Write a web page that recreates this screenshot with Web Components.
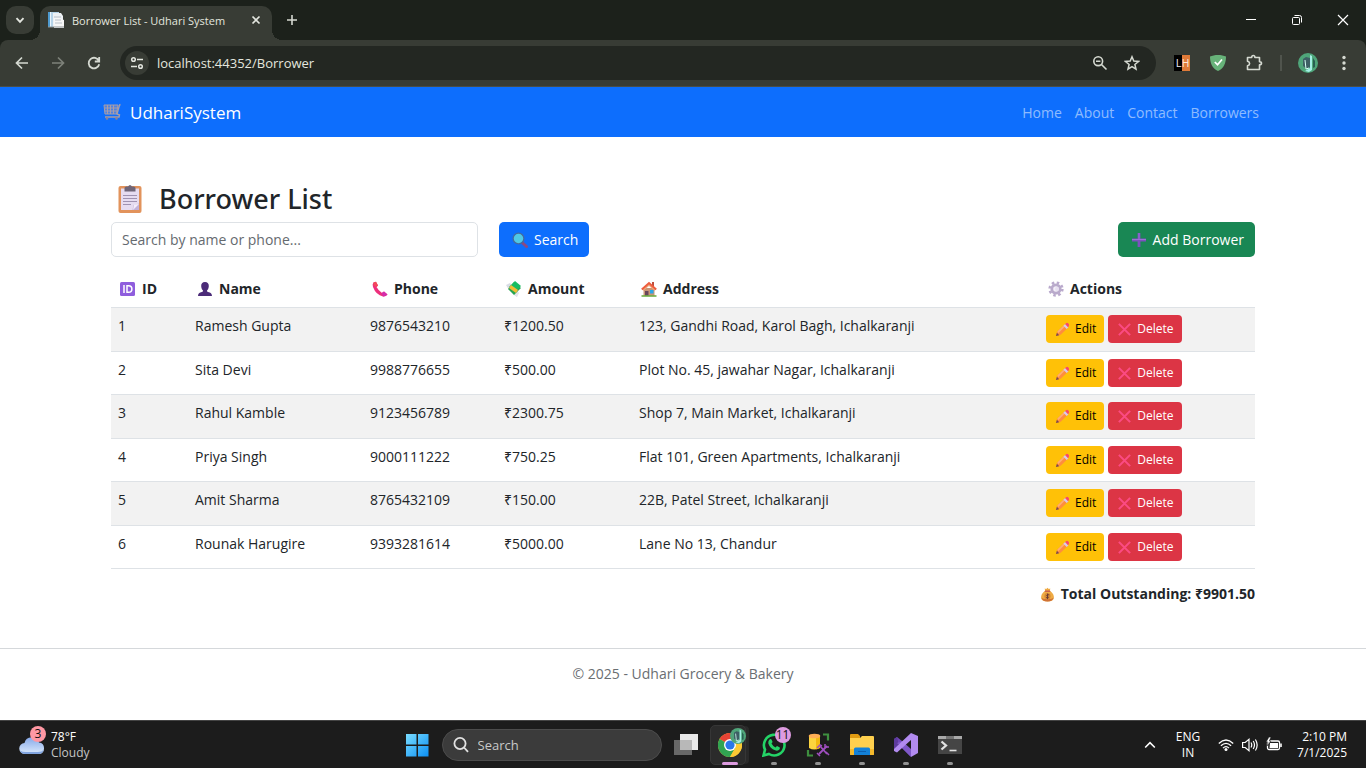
<!DOCTYPE html>
<html lang="en">
<head>
<meta charset="utf-8">
<title>Borrower List - Udhari System</title>
<meta name="viewport" content="width=device-width, initial-scale=1">
<style>
  body { margin: 0; min-height: 100vh; display: flex; flex-direction: column; background: #fff;
    font-family: "Open Sans", "Noto Sans", sans-serif; font-size: 14px; color: #212529; }
  site-page { flex: 1; }
</style>
</head>
<body>
<tab-strip label="Borrower List - Udhari System"></tab-strip>
<browser-toolbar url="localhost:44352/Borrower"></browser-toolbar>
<site-page>
  <site-navbar slot="nav">
    <span slot="brand">UdhariSystem</span>
  </site-navbar>
  <page-title>Borrower List</page-title>
  <search-bar></search-bar>
  <borrower-table></borrower-table>
  <total-line>Total Outstanding: ₹9901.50</total-line>
  <span slot="footer">© 2025 - Udhari Grocery &amp; Bakery</span>
</site-page>
<task-bar></task-bar>

<script>
const ICONS = {
  chevron: ['0 0 16 16', '<path d="M4.5 6.2 8 9.8l3.500-3.600" fill="none" stroke="#e3e6df" stroke-width="1.900"/>'],
  favicon: ['0 0 16 16', '<path d="M0 0h9v15H0z" fill="#e8f3fb"/><path d="M0 0h2v15H0z" fill="#4f9bd0"/><path d="M3 0h8v15H3z" fill="#b5d3e8"/><path d="M5 1h8l2 3v11H5z" fill="#eef1f4"/><path d="M11 6l5 2v8H6V6z" fill="#f7f7f7"/><path d="M6 5h7M7 8h6M7 11h7" stroke="#b9c0c8"/><path d="M0 15h16" stroke="#8d9497"/>'],
  close: ['0 0 16 16', '<path d="M4.500 4.500l7 7m0-7-7 7" stroke="#e3e6df" stroke-width="1.700"/>'],
  plus: ['0 0 16 16', '<path d="M8 3v10M3 8h10" stroke="#d5d9d1" stroke-width="1.600"/>'],
  winmin: ['0 0 16 16', '<path d="M3 7.500h10" stroke="#fff"/>'],
  winmax: ['0 0 16 16', '<rect x="3.500" y="5.500" width="7" height="7" rx="1" fill="none" stroke="#fff"/><path d="M5.500 3.500h5a2 2 0 0 1 2 2v5" fill="none" stroke="#fff"/>'],
  winclose: ['0 0 16 16', '<path d="M3 3l10 10m0-10L3 13" stroke="#fff" stroke-width="1.200"/>'],
  back: ['0 0 16 16', '<path d="M14 8H3m5-5.500L2.500 8 8 13.500" fill="none" stroke="#d5d9d1" stroke-width="1.700"/>'],
  forward: ['0 0 16 16', '<path d="M2 8h11M8 2.500 13.500 8 8 13.500" fill="none" stroke="#7d8179" stroke-width="1.700"/>'],
  reload: ['0 0 16 16', '<path d="M12.900 6A5.300 5.300 0 1 0 13.200 9.200M13.200 2v4.500H8.800" fill="none" stroke="#d5d9d1" stroke-width="1.800"/>'],
  tune: ['0 0 16 16', '<g fill="none" stroke="#e3e6df" stroke-width="1.500"><circle cx="4.500" cy="4.500" r="1.800"/><path d="M8 4.500h6M2 11.500h6"/><circle cx="11.500" cy="11.500" r="1.800"/></g>'],
  zoomout: ['0 0 16 16', '<g fill="none" stroke="#d5d9d1" stroke-width="1.600"><circle cx="6.200" cy="6.200" r="4.400"/><path d="M9.500 9.500l5 5M4 6.200h4.400"/></g>'],
  star: ['0 0 16 16', '<path d="M8 1.800l1.800 4.300 4.700.4-3.600 3 1.100 4.600L8 11.600l-4 2.500 1.100-4.600-3.600-3 4.700-.4z" fill="none" stroke="#d5d9d1" stroke-width="1.500"/>'],
  lh: ['0 0 16 16', '<path d="M0 0h8v16H0z" fill="#000"/><path d="M8 0h8v16H8z" fill="#e07b39"/><text x="2" y="12" font-family="Liberation Sans, sans-serif" font-size="10" fill="#eee">L</text><text x="8" y="12" font-family="Liberation Sans, sans-serif" font-size="10" fill="#fbe6d8">H</text>'],
  shield: ['0 0 16 16', '<path d="M8 0c3 0 6 .6 8 1.500 0 7-2.500 12-8 14.500C2.500 13.500 0 8.500 0 1.500 2 .6 5 0 8 0z" fill="#67b279"/><path d="M4.800 7l2.700 2.700L12 4.500" fill="none" stroke="#fff" stroke-width="1.700"/>'],
  puzzle: ['0 0 18 18', '<path d="M2.500 3.500h4.200c0-1.500.7-2 1.600-2s1.600.5 1.600 2h4.600v4.200c1.600 0 2 .8 2 1.600s-.4 1.600-2 1.600v4.600h-12v-3.800c1.500-.3 2.100-1.200 2.100-2.200S4 7.600 2.500 7.300z" fill="none" stroke="#d5d9d1" stroke-width="1.600" stroke-linejoin="round"/>'],
  avatar: ['0 0 20 20', '<circle cx="10" cy="10" r="10" fill="#4fa57a"/><path d="M5 6l3-2 4 1v9l-3 2-4-3z" fill="#3d5f64"/><path d="M12 2l2 1v14l-3 2-4-1 5-3z" fill="#a3efe5"/><path d="M7 7l1 9 3-1" stroke="#d5fff5" fill="none"/><path d="M15 5l2 3v6l-2 1z" fill="#286052"/>'],
  dots: ['0 0 16 16', '<g fill="#d5d9d1"><circle cx="8" cy="2.500" r="1.700"/><circle cx="8" cy="8" r="1.700"/><circle cx="8" cy="13.500" r="1.700"/></g>'],
  cart: ['0 0 18 18', '<g fill="none" stroke="#a79da8"><path d="M1 2h14l-1.500 9H2z" fill="#4f81df"/><path d="M1.500 5h13M1.500 8h12.500M4.500 2v9M7.500 2v9M10.500 2v9"/><path d="M17.500 1.500l-1 .5-2.500 9 2.500 1-.5 2H2" stroke-width="1.400"/></g><circle cx="4" cy="15.500" r="1.300" fill="#8b8190"/><circle cx="13.500" cy="15.500" r="1.300" fill="#8b8190"/>'],
  clipboard: ['0 0 24 28', '<rect x="0" y="1" width="23" height="27" rx="2" fill="#e2935c"/><path d="M2.500 3.500h18v15.500l-6 6h-12z" fill="#e6dcf1"/><path d="M20.500 18.500V25h-6.500l1-5z" fill="#c3b2da"/><path d="M14.500 25l1-5.500 5-.5z" fill="#f4edfb"/><path d="M6 6.500V3q0-1.500 2-1.500h1.500q2-3 4 0H15q2 0 2 1.500v3.500z" fill="#6f6578"/><path d="M4.500 10.500h14M4.500 13.500h14M4.500 16.500h14M4.500 19.500h8" stroke="#9f92b1"/>'],
  idbox: ['0 0 16 16', '<rect x="0" y="1" width="15" height="14" rx="1.500" fill="#8f5ddd"/><path d="M4 4v8" stroke="#fff" stroke-width="1.500"/><path d="M7 4.700h1.600a3 3 0 0 1 0 6.600H7z" fill="none" stroke="#fff" stroke-width="1.500"/>'],
  person: ['0 0 16 16', '<path d="M8 1c2.600 0 4 1.700 3.800 4.200C11.600 8 10.500 9 10 9.500c0 1 .5 1.500 2 1.800 2 .4 2.800 1.500 3 3.700H1c.2-2.200 1-3.300 3-3.700 1.500-.3 2-.8 2-1.800-.5-.5-1.600-1.500-1.800-4.300C4 2.700 5.400 1 8 1z" fill="#4b2b78"/>'],
  phone: ['0 0 16 16', '<path d="M1.500 1.500Q0 3 1 6q3 8 10 9.500 3 .4 4.500-2L12 10.500l-2 1.500Q6 9 4.500 6L6 4.500 4 .7z" fill="#ed2f7c"/><path d="M1.500 1.500 4 .7 6 4.500 4.500 6Q1 4.500 1.500 1.500" fill="#f24a58"/><path d="M9.500 12l2.500-1.500 3.500 3q-2 2-4.500 2z" fill="#d42cab"/>'],
  money: ['0 0 16 16', '<path d="M0 4l4-2 3 4-4 3zM7 9l5 1-1 6-3-2z" fill="#d9dce4"/><path d="M11 9l2 3-2 4-3-3z" fill="#e4e4ea"/><path d="M8 1l7 6-7 7-6-6z" fill="#27a552"/><path d="M9 0l6 5-6 6-6-5z" fill="#17bd62"/><path d="M5 4l7 5-2 3-7-5z" fill="#f3bd35"/>'],
  house: ['0 0 16 16', '<path d="M2.500 7h11v8h-11z" fill="#c99576"/><path d="M11 1h2v5h-2z" fill="#c04e3c"/><path d="M8 2L2 8v2l6-5 6 5V8z" fill="#f0aa7c"/><path d="M.800 8.500 8 2l7.200 6.500" fill="none" stroke="#ee5d3f" stroke-width="2"/><path d="M4 10h3.500v5H4z" fill="#68465a"/><path d="M9 9h3.500v3.500H9z" fill="#2aa6e8"/><path d="M.500 15h15" stroke="#6fae43" stroke-width="1.600"/>'],
  gear: ['0 0 16 16', '<circle cx="8" cy="8" r="6.400" fill="none" stroke="#b9a9cc" stroke-width="2.500" stroke-dasharray="2.500 2.527"/><circle cx="8" cy="8" r="4.200" fill="#f3eef8" stroke="#b9aacb" stroke-width="2.800"/><circle cx="9" cy="8" r="2" fill="#e6def0"/>'],
  magnifier: ['0 0 16 16', '<path d="M9.500 10l5 4.500" stroke="#8a4a83" stroke-width="3" stroke-linecap="round"/><circle cx="6.500" cy="6.500" r="5.400" fill="#4fc9e6" stroke="#456a9e" stroke-width="1.300"/>'],
  addplus: ['0 0 16 16', '<path d="M8 1v14M1 8h14" stroke="#7b51bd" stroke-width="2.800"/><path d="M8 1v7M1 7.500h14" stroke="#9a70d8" stroke-width="1"/>'],
  pencil: ['0 0 16 16', '<path d="M1 15l1.500-5L10 3l3.500 3.500L6 13.500z" fill="#ff8d3e"/><path d="M2.500 10L10 3l1.200 1.200L3.500 12z" fill="#ffae6f"/><path d="M1 15l1-3.500L4.500 14z" fill="#7a4a4a"/><path d="M9 4l3.500 3.500 1.800-1.800-3.500-3.500z" fill="#d8cbea"/><path d="M10.800 2.200 12.300 1q1-.5 2 .7t.6 2.200l-1 1.800z" fill="#f8486c"/>'],
  cross: ['0 0 16 16', '<path d="M2 2l12 12m0-12L2 14" stroke="#fb4b83" stroke-width="2.200"/>'],
  bag: ['0 0 16 16', '<path d="M5.500 4 5 1.500l1.700.5L8 .8 9.300 2l1.700-.5L10.500 4q5 3.500 4.200 8-.7 3.500-6.700 3.500T1.300 12Q.5 7.500 5.500 4z" fill="#efab45"/><path d="M1.300 11q1 4.500 6.700 4.500t6.700-4.500q-1 2-6.700 2T1.300 11" fill="#cf7238"/><path d="M5.300 3.800h5.400l.3 1.400H5z" fill="#c9604a"/><circle cx="8" cy="9.800" r="3.300" fill="#d58a35"/><path d="M8 7v6M9.800 8.300h-2q-1.300.8 0 1.500t1 1.500H6.500" stroke="#693a34" fill="none"/>'],
  cloud: ['0 0 26 18', '<defs><linearGradient id="c" x1="0" y1="0" x2="0" y2="1"><stop stop-color="#85a8e8"/><stop offset="1" stop-color="#dbeafd"/></linearGradient></defs><path d="M6 18a5.500 5.500 0 0 1-.5-11A7.500 7.500 0 0 1 20 6.500 5.800 5.800 0 0 1 20 18z" fill="url(#c)"/><path d="M1 14.500q2 1.500 6 1.500h12q4 0 5.500-2Q23.500 18 20 18H6q-4 0-5-3.500" fill="#80a4df"/>'],
  start: ['0 0 24 24', '<defs><linearGradient id="w" x1="0" y1="0" x2="1" y2="1"><stop stop-color="#79dcff"/><stop offset="1" stop-color="#0c90f5"/></linearGradient></defs><path d="M1 1h10.500v10.500H1zM13 1h10.500v10.500H13zM1 13h10.500v10.500H1zM13 13h10.500v10.500H13z" fill="url(#w)"/>'],
  lens: ['0 0 16 16', '<g fill="none" stroke="#e2e2e2" stroke-width="1.800"><circle cx="7" cy="6.500" r="5.600"/><path d="M11 10.500l4 4.300"/></g>'],
  taskview: ['0 0 24 24', '<path d="M0 7h18v15H0z" fill="#686868"/><path d="M6 1h18v16H6z" fill="#e9e9e9"/><path d="M6 7h12v10H6z" fill="#b8b8b8"/>'],
  chrome: ['0 0 24 24', '<circle cx="12" cy="12" r="12" fill="#fbc934"/><path d="M12 12L1.600 6A12 12 0 0 1 22.400 6z" fill="#e64335"/><path d="M1.600 6A12 12 0 0 0 12 24l5.200-9L12 12z" fill="#31a452"/><path d="M12 6h10.400A12 12 0 0 1 12 24l5.200-9z" fill="#fbc934"/><circle cx="12" cy="12" r="6" fill="#fff"/><circle cx="12" cy="12" r="4.600" fill="#2a77ea"/>'],
  whatsapp: ['0 0 24 24', '<path d="M1.500 22.500l1.500-5.800A10.300 10.300 0 1 1 7 21z" fill="none" stroke="#24d467" stroke-width="2.600"/><path d="M7.500 6.500Q9 5.500 9.700 7l.9 2-1.100 1.500q1.300 2.600 4 4l1.500-1.500 2.500 1.200q1 .6-.1 2.300-1.500 1.800-4.300.8-5-1.800-6.800-6.800Q6 7.800 7.500 6.500" fill="#24d467"/>'],
  sql: ['0 0 24 24', '<path d="M17 1.500h5v6M2 17v5.500h5" fill="none" stroke="#3e8f3f" stroke-width="2.200"/><path d="M3 3v12q5 3 11 0V3z" fill="#fcd53f"/><path d="M10 3h4v12l-4 1.300z" fill="#f2b911"/><ellipse cx="8.500" cy="3" rx="5.800" ry="2.300" fill="#ffae55"/><path d="M13 21l8-8m-7 0l7 8" stroke="#a04fc0" stroke-width="1.800"/><path d="M11 15l3-3 2 1M19 11l0 3 4 0M11 20l3 3M20 19l3 3" fill="none" stroke="#a04fc0" stroke-width="1.500"/>'],
  folder: ['0 0 24 24', '<path d="M0 2q0-1 1-1h7l2 2v4H0z" fill="#e09b12"/><path d="M0 5h10l2-2h11q1 0 1 1v17q0 1-1 1H1q-1 0-1-1z" fill="#ffd04e"/><path d="M0 16h24v5q0 1-1 1H1q-1 0-1-1z" fill="#f4b92c"/><path d="M4 22v-6q0-1.500 1.500-1.500h13q1.500 0 1.500 1.500v6z" fill="#1381d8"/><path d="M8 18h8v1H8z" fill="#0c5fb0"/>'],
  vs: ['0 0 24 24', '<path d="M17 24L3 10 0 6l3-2 5 4z" fill="#7047b8"/><path d="M0 6v11l3 2 1-2V8L3 4z" fill="#5d3a9d"/><path d="M8 8l9 8v8L3 10z" fill="#7f58c8"/><path d="M17 0l7 3v17l-7 4V7L3 19.500 0 18v-2z" fill="#b28bf0"/>'],
  terminal: ['0 0 24 24', '<path d="M0 3h24v18H0z" fill="#454545"/><path d="M0 3h24v3H0z" fill="#a9a9a9"/><path d="M8 3h8v3H8z" fill="#747474"/><path d="M3.500 8.500 8 12.500l-4.500 4" fill="none" stroke="#e2e2e2" stroke-width="2.300"/><path d="M11.500 17.500h7" stroke="#e2e2e2" stroke-width="1.600"/>'],
  caret: ['0 0 16 16', '<path d="M2.500 10.800 8 5.300l5.500 5.500" fill="none" stroke="#fff" stroke-width="1.800"/>'],
  wifi: ['0 0 16 16', '<g fill="none" stroke="#fff" stroke-width="1.300"><path d="M.8 6.500Q8-.500 15.200 6.500M2.900 8.800Q8 3.900 13.100 8.800M5 11.100Q8 8.200 11 11.100"/></g><circle cx="8" cy="12.600" r="1.500" fill="#fff"/>'],
  sound: ['0 0 16 16', '<g fill="none" stroke="#fff" stroke-width="1.200"><path d="M.600 5.500h2.600L7 2.300v11.400L3.200 10.500H.600z"/><path d="M9 5.500q1.500 2.500 0 5M11.200 4q2.600 4 0 8M13.400 2.500q3.500 5.500 0 11"/></g>'],
  battery: ['0 0 16 16', '<rect x="1.500" y="4" width="12" height="8.500" rx="1.500" fill="none" stroke="#fff" stroke-width="1.300"/><path d="M4 6h8v5H3.500z" fill="#fff"/><path d="M15 6.500v3.500" stroke="#fff" stroke-width="1.600"/><path d="M3 0 0 5h2L1 9l4-5H3.300L5 0z" fill="#fff" stroke="#1c1c1c" stroke-width=".600"/>']
};

const define = (name, css, html) => customElements.define(name, class extends HTMLElement {
  connectedCallback() {
    if (this.shadowRoot) return;
    const body = typeof html === 'function' ? html(this) : html;
    this.attachShadow({ mode: 'open' }).innerHTML = `<style>:host,*,*::before,*::after{box-sizing:border-box}${css}</style>${body}`;
  }
});
const icon = (name, size = 16, h = size) => `<ui-icon name="${name}" w="${size}" h="${h}"></ui-icon>`;
const RESET = 'button{font:inherit;color:inherit;border:0;background:none;padding:0;display:flex;align-items:center;justify-content:center}';

define('ui-icon', ':host{display:inline-block;flex:none;line-height:0}svg{display:block}', el => {
  const [box, art] = ICONS[el.getAttribute('name')];
  return `<svg viewBox="${box}" width="${el.getAttribute('w')}" height="${el.getAttribute('h')}" aria-hidden="true">${art}</svg>`;
});

define('tab-strip', `${RESET}
  :host{display:flex;height:40px;padding:6px 0 0 6px;background:#1c211b;color:#e3e6df}
  .list{width:28px;height:28px;border-radius:10px;background:#383c35;margin-right:6px}
  .tab{position:relative;display:flex;align-items:center;gap:8px;width:232px;padding:0 8px 6px;background:#383c35;border-radius:10px 10px 0 0}
  .tab::before,.tab::after{content:"";position:absolute;bottom:0;width:10px;height:10px}
  .tab::before{left:-10px;background:radial-gradient(circle at 0 0,transparent 10px,#383c35 10px)}
  .tab::after{right:-10px;background:radial-gradient(circle at 100% 0,transparent 10px,#383c35 10px)}
  .title{flex:1;white-space:nowrap;font-size:11px}
  .new{width:40px;height:28px}
  .win{display:flex;margin-left:auto}.win button{width:46px;height:28px}`,
  el => `<button class="list" aria-label="Search tabs">${icon('chevron')}</button>
  <div class="tab">${icon('favicon')}<span class="title">${el.getAttribute('label')}</span><button aria-label="Close tab">${icon('close')}</button></div>
  <button class="new" aria-label="New tab">${icon('plus')}</button>
  <div class="win"><button aria-label="Minimize">${icon('winmin')}</button><button aria-label="Restore">${icon('winmax')}</button><button aria-label="Close">${icon('winclose')}</button></div>`);

define('browser-toolbar', `${RESET}
  :host{display:block;background:#1c211b}
  .bar{display:flex;align-items:center;height:47px;padding:0 4px;background:#383c35;border-bottom:1px solid #4a4e47;border-radius:8px 8px 0 0}
  button{width:36px;height:34px}
  .url{flex:1;display:flex;align-items:center;height:34px;margin:0 8px;padding:0 8px 0 5px;border-radius:17px;background:#232722}
  .url .info{width:24px;height:24px;border-radius:12px;background:#383c35;margin-right:8px}
  .url button{width:32px}
  input{flex:1;min-width:0;border:0;padding:0;background:none;color:#e3e6df;font:13px "Open Sans",sans-serif;outline:0}
  i{width:2px;height:16px;margin:0 8px;background:#50544d}`,
  el => `<div class="bar"><button aria-label="Back">${icon('back')}</button><button aria-label="Forward">${icon('forward')}</button><button aria-label="Reload">${icon('reload')}</button>
  <div class="url"><button class="info" aria-label="Site information">${icon('tune')}</button><input aria-label="Address" value="${el.getAttribute('url')}"><button aria-label="Zoom">${icon('zoomout')}</button><button aria-label="Bookmark">${icon('star')}</button></div>
  <button aria-label="LH extension">${icon('lh')}</button><button aria-label="Shield extension">${icon('shield')}</button><button aria-label="Extensions">${icon('puzzle', 18)}</button><i></i>
  <button aria-label="Profile">${icon('avatar', 20)}</button><button aria-label="Menu">${icon('dots')}</button></div>`);

define('site-page', `
  :host{display:flex;flex-direction:column;background:#fff}
  main{flex:1;width:100%;max-width:1188px;margin:0 auto;padding:43px 22px 0}
  footer{height:72px;border-top:1px solid #d5d8db;text-align:center;color:#6a6e72;line-height:50px}`,
  `<slot name="nav"></slot><main><slot></slot></main><footer><slot name="footer"></slot></footer>`);

define('site-navbar', `
  :host{display:block;background:#0d6efd}
  nav{display:flex;align-items:center;height:50px;max-width:1188px;margin:0 auto;padding:0 18px 0 14px}
  a{color:rgba(255,255,255,.55);text-decoration:none}
  .brand{display:flex;align-items:center;gap:9px;margin-right:auto;color:#fff;font-size:17px}
  ul{display:flex;gap:13px;margin:0;padding:0;list-style:none}`,
  `<nav><a class="brand" href="#">${icon('cart', 18)}<slot name="brand"></slot></a>
  <ul>${['Home', 'About', 'Contact', 'Borrowers'].map(t => `<li><a href="#">${t}</a></li>`).join('')}</ul></nav>`);

define('page-title', `:host{display:block}
  h2{display:flex;align-items:center;gap:16px;margin:0 0 4px;padding:0 7px;font:500 27px/38px "Noto Sans",sans-serif}`,
  `<h2>${icon('clipboard', 25, 28)}<slot></slot></h2>`);

define('search-bar', `${RESET}
  :host{display:block}
  form{display:flex;justify-content:space-between}
  .find{display:flex;gap:21px}
  input{width:367px;height:35px;padding:0 10px;border:1px solid #dee2e6;border-radius:5px;font:14px "Open Sans",sans-serif;color:#212529}
  input::placeholder{color:#656a6f;opacity:1}
  button{height:35px;border-radius:5px;color:#fff;gap:6px;padding:0 11px 0 13px;background:#0d6efd}
  .add{background:#198754}`,
  `<form><div class="find"><input type="search" aria-label="Search borrowers" placeholder="Search by name or phone..."><button type="button">${icon('magnifier')}Search</button></div>
  <button type="button" class="add">${icon('addplus')}Add Borrower</button></form>`);

define('action-button', `${RESET}
  :host{display:inline-block;font-size:12px}
  button{height:28px;border-radius:4px;gap:5px;padding:0 8px 0 9px}
  button.edit{background:#ffc107;color:#000}
  button.delete{background:#dc3545;color:#fff}`,
  el => `<button type="button" class="${el.getAttribute('kind')}">${icon(el.getAttribute('kind') === 'edit' ? 'pencil' : 'cross', 15)}<slot></slot></button>`);

const HEAD = [['idbox', 'ID'], ['person', 'Name'], ['phone', 'Phone'], ['money', 'Amount'], ['house', 'Address'], ['gear', 'Actions']];
const ROWS = [
  [1, 'Ramesh Gupta', '9876543210', '₹1200.50', '123, Gandhi Road, Karol Bagh, Ichalkaranji'],
  [2, 'Sita Devi', '9988776655', '₹500.00', 'Plot No. 45, jawahar Nagar, Ichalkaranji'],
  [3, 'Rahul Kamble', '9123456789', '₹2300.75', 'Shop 7, Main Market, Ichalkaranji'],
  [4, 'Priya Singh', '9000111222', '₹750.25', 'Flat 101, Green Apartments, Ichalkaranji'],
  [5, 'Amit Sharma', '8765432109', '₹150.00', '22B, Patel Street, Ichalkaranji'],
  [6, 'Rounak Harugire', '9393281614', '₹5000.00', 'Lane No 13, Chandur']];

define('borrower-table', `
  :host{display:block;margin-top:14px}
  table{width:100%;table-layout:fixed;border-collapse:separate;border-spacing:0}
  col:nth-child(1){width:77px}col:nth-child(2){width:175px}col:nth-child(3){width:134px}col:nth-child(4){width:135px}col:nth-child(6){width:216px}
  th,td{text-align:left;vertical-align:top;padding:7px 7px 0;border-bottom:1px solid #dee2e6;line-height:22px}
  th{height:37px;font-weight:700}
  th span{display:flex;align-items:center;gap:6px;padding-left:2px}
  tr:nth-child(odd) td{height:44px;background:#f2f2f2}
  tr:nth-child(even) td{height:43px}
  .acts{display:flex;gap:4px}`,
  `<table><colgroup>${HEAD.map(() => '<col>').join('')}</colgroup><thead><tr>${HEAD.map(([i, t]) => `<th scope="col"><span>${icon(i)}${t}</span></th>`).join('')}</tr></thead>
  <tbody>${ROWS.map(r => `<tr>${r.map(c => `<td>${c}</td>`).join('')}<td><div class="acts"><action-button kind="edit">Edit</action-button><action-button kind="delete">Delete</action-button></div></td></tr>`).join('')}</tbody></table>`);

define('total-line', `:host{display:flex;justify-content:flex-end;align-items:center;gap:6px;margin-top:14px;line-height:22px;font-weight:700}`,
  `${icon('bag', 15)}<slot></slot>`);

const APPS = [['chrome', 'Chrome'], ['whatsapp', 'WhatsApp'], ['sql', 'SQL Server'], ['folder', 'File Explorer'], ['vs', 'Visual Studio'], ['terminal', 'Terminal']];
define('task-bar', `${RESET}
  :host{display:grid;grid-template-columns:1fr auto 1fr;height:48px;background:#1c1c1c;border-top:1px solid #444;color:#fff;font-size:12px;line-height:16px}
  .weather{position:relative;display:flex;align-items:center;gap:6px;padding-left:19px;justify-self:start;text-align:left}
  .weather small{font-size:12px;color:#c5c5c5}
  .num{position:absolute;display:grid;place-items:center;width:16px;height:16px;border-radius:8px;font-size:12px;color:#111}
  .weather .num{left:30px;top:5px;background:#ff98a4}
  .mid{position:relative;z-index:0;display:flex;align-items:center}
  .mid>button{position:relative;width:44px;height:40px}
  .mid label{display:flex;align-items:center;gap:9px;width:220px;height:32px;margin:0 2px 0 3px;padding:0 10px;border:1px solid #4c4c4c;border-radius:16px;background:#3b3b3b}
  input{width:100%;min-width:0;border:0;padding:0;background:none;outline:0;font:13px "Open Sans",sans-serif}
  input::placeholder{color:#c9c9c9;opacity:1}
  .app::after{content:"";position:absolute;left:19px;bottom:0;width:6px;height:3px;border-radius:2px;background:#929292}
  .app.on::before{content:"";position:absolute;z-index:-1;left:2px;top:0;width:36px;height:40px;border-radius:5px;background:#2b2b2b;border:1px solid #363636;box-shadow:4px 0 0 -1px #292929}
  .app.on::after{left:14px;width:16px;background:#dd9be0}
  .app .num{left:23px;top:2px;background:#dd9be0}
  .app .face{position:absolute;left:22px;top:3px}
  .tray{display:flex;align-items:center;justify-self:end;padding-right:19px}
  .tray button{width:24px;height:40px}
  .tray .lang{width:40px;margin:0 6px;text-align:center}
  .tray .clock{width:auto;margin-left:11px;text-align:right}`,
  `<button class="weather">${icon('cloud', 26, 18)}<span class="num">3</span><span>78°F<br><small>Cloudy</small></span></button>
  <div class="mid"><button aria-label="Start">${icon('start', 24)}</button><label>${icon('lens')}<input placeholder="Search" aria-label="Search"></label><button aria-label="Task view">${icon('taskview', 24)}</button>
  ${APPS.map(([i, t]) => `<button class="app${i === 'chrome' ? ' on' : ''}" aria-label="${t}">${icon(i, 24)}${i === 'whatsapp' ? '<span class="num">11</span>' : ''}${i === 'chrome' ? `<span class="face">${icon('avatar', 16)}</span>` : ''}</button>`).join('')}</div>
  <div class="tray"><button aria-label="Hidden icons">${icon('caret', 14)}</button><button class="lang">ENG<br>IN</button><button aria-label="Network">${icon('wifi')}</button><button aria-label="Volume">${icon('sound')}</button><button aria-label="Battery">${icon('battery')}</button><button class="clock">2:10 PM<br>7/1/2025</button></div>`);
</script>
</body>
</html>
